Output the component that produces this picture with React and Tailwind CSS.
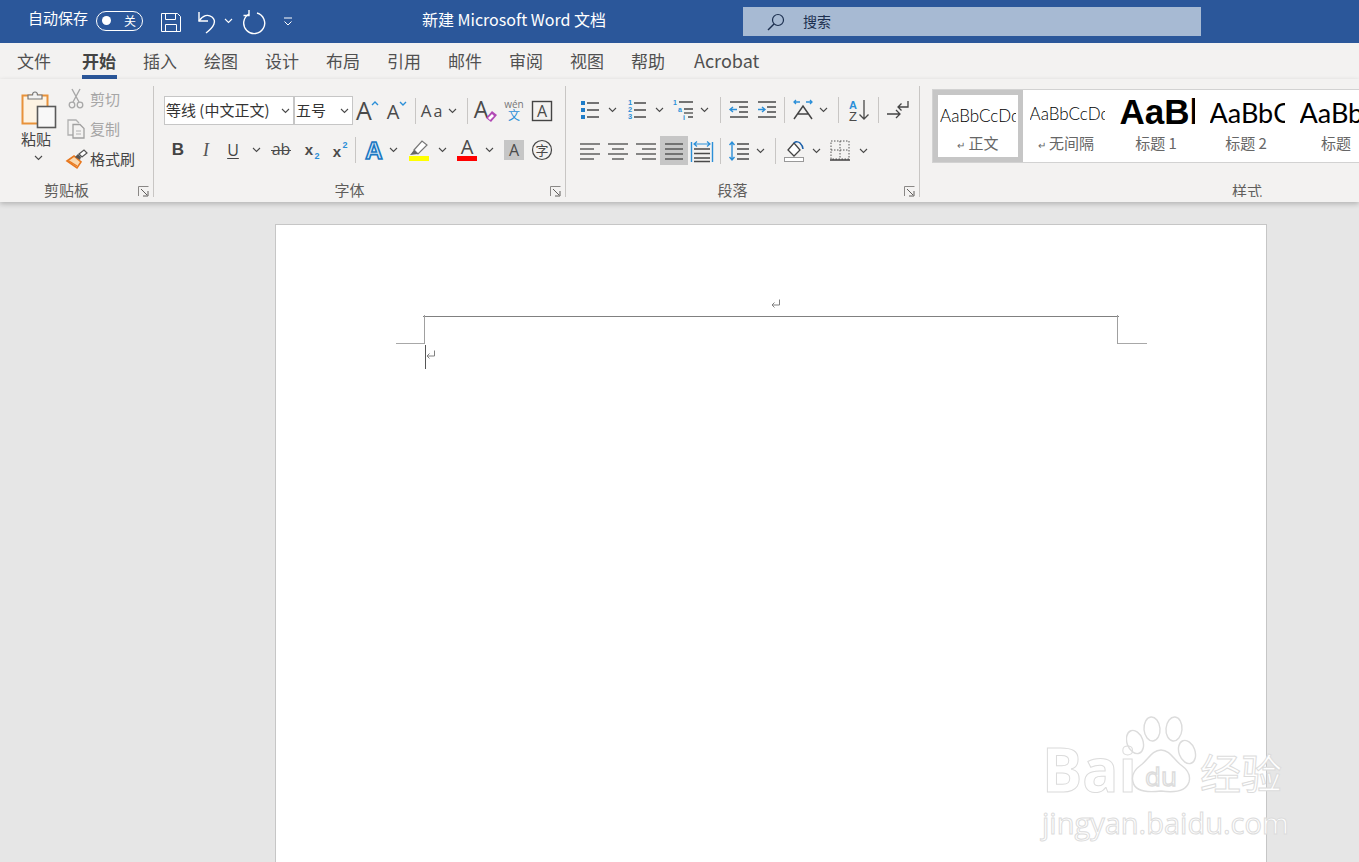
import React from 'react';

const font = 'font-["Noto_Sans_CJK_SC","Liberation_Sans",sans-serif]';
const INK = '#4a4a4a';
const BLUE = '#2b8fd8';

const Slot = ({ className = '', children }) => (
  <div className={`flex items-center justify-center shrink-0 h-[28px] ${className}`}>{children}</div>
);

const Chev = ({ color = INK }) => (
  <svg width="9" height="6" viewBox="0 0 9 6"><path d="M1 1l3.5 3.5L8 1" fill="none" stroke={color} strokeWidth="1.1" /></svg>
);

const Divider = ({ className = '' }) => <div className={`w-px h-[26px] bg-[#c8c6c4] shrink-0 ${className}`} />;

const Ico = ({ children, w = 24, h = 24 }) => (
  <svg width={w} height={h} viewBox={`0 0 ${w} ${h}`} fill="none" className="overflow-visible">{children}</svg>
);

const Glyph = ({ x = 12, y = 19, size = 20, fill = INK, weight = 400, family = 'Open Sans', style = 'normal', children, ...rest }) => (
  <text x={x} y={y} fontSize={size} fill={fill} fontWeight={weight} fontFamily={family} fontStyle={style} textAnchor="middle" {...rest}>{children}</text>
);

const Launcher = () => (
  <svg width="11" height="11" viewBox="0 0 11 11" fill="none" stroke="#605e5c">
    <path d="M.5 10V.5H10.5" stroke="#8a8886" />
    <path d="M3 3l6 6M5 10h5V5" />
  </svg>
);

const ReturnMark = () => (
  <svg width="11" height="11" viewBox="0 0 11 11" fill="none" stroke="#808080">
    <path d="M9.5 1.5v5.5H2" />
    <path d="M4.5 4.5L2 7l2.5 2.5" />
  </svg>
);

const Lines = ({ rows, stroke = INK }) => (
  <Ico>
    {rows.map(([x1, x2, y], i) => <path key={i} d={`M${x1} ${y}H${x2}`} stroke={stroke} strokeWidth="1.3" />)}
  </Ico>
);

const PasteIcon = () => (
  <svg width="36" height="39" viewBox="0 0 36 39" fill="none">
    <rect x="1.5" y="5.5" width="25" height="28" fill="#fdf3e3" stroke="#e8923a" strokeWidth="2" />
    <path d="M7 9V5h4.5c0-4 5-4 5 0H21v4z" fill="#f3f2f1" stroke="#777" strokeWidth="1.2" />
    <rect x="16.5" y="16.5" width="18" height="21" fill="#f8f8f8" stroke="#5a5a5a" strokeWidth="1.6" />
  </svg>
);

const CutIcon = () => (
  <Ico w={20} h={22}>
    <path d="M6 1l7 13M14 1L7 14" stroke="#a8a8a8" strokeWidth="1.4" />
    <circle cx="6" cy="17" r="2.8" stroke="#a8a8a8" strokeWidth="1.3" />
    <circle cx="14" cy="17" r="2.8" stroke="#a8a8a8" strokeWidth="1.3" />
  </Ico>
);

const CopyIcon = () => (
  <Ico w={20} h={22}>
    <path d="M7 17H2V2h8l3 3" stroke="#b0b0b0" strokeWidth="1.3" />
    <path d="M7 6.5h7l4 4V20H7z" fill="#f3f2f1" stroke="#a0a0a0" strokeWidth="1.3" />
    <path d="M10 13h5M10 16h5" stroke="#b0b0b0" />
  </Ico>
);

const BrushIcon = () => (
  <Ico w={22} h={20}>
    <path d="M1 12l7-5 7 6-4 6z" fill="#f9d9b0" stroke="#e8781e" strokeWidth="1.6" />
    <path d="M3 12l8 5" stroke="#e8781e" strokeWidth="1.3" />
    <path d="M9 8l3-3 3 3-1 3z" fill="#555" />
    <path d="M13 5l5-4 3 3-5 4z" fill="#fff" stroke="#555" strokeWidth="1.2" />
  </Ico>
);

const GrowIcon = () => (
  <Ico><Glyph x={9} y={21} size={25}>A</Glyph><path d="M17 6l3-3 3 3" stroke={BLUE} strokeWidth="1.4" /></Ico>
);
const ShrinkIcon = () => (
  <Ico><Glyph x={9} y={20} size={20}>A</Glyph><path d="M16 3l3 3 3-3" stroke={BLUE} strokeWidth="1.4" /></Ico>
);
const AaIcon = () => (
  <Ico w={26}>
    <Glyph x={7} y={18} size={17}>A</Glyph>
    <Glyph x={19} y={18} size={16}>a</Glyph>
  </Ico>
);
const ClearIcon = () => (
  <Ico w={28}>
    <Glyph x={10} y={19} size={23}>A</Glyph>
    <path d="M15 19l6-7 5 4-6 7z" fill="#b24ab5" />
    <path d="M17 19l4-4 2 2-4 4z" fill="#fff" />
  </Ico>
);
const PhoneticIcon = () => (
  <Ico w={24}>
    <Glyph y={9} size={10} fill="#777">wén</Glyph>
    <Glyph y={21} size={12} fill={BLUE} family="Noto Sans CJK SC">文</Glyph>
  </Ico>
);
const BoxAIcon = () => (
  <Ico>
    <rect x="2.5" y="2.5" width="19" height="19" stroke="#444" strokeWidth="1.4" />
    <Glyph y={18} size={16}>A</Glyph>
  </Ico>
);
const Strike = () => (
  <Ico>
    <Glyph y={17} size={16}>ab</Glyph>
    <path d="M2 12.5h20" stroke={INK} strokeWidth="1" />
  </Ico>
);
const Sub = () => (
  <Ico>
    <Glyph x={10} y={17} size={15} weight={700} family="Liberation Sans">x</Glyph>
    <Glyph x={18} y={21} size={9} fill={BLUE} weight={700} family="Liberation Sans">2</Glyph>
  </Ico>
);
const Sup = () => (
  <Ico>
    <Glyph x={10} y={19} size={15} weight={700} family="Liberation Sans">x</Glyph>
    <Glyph x={18} y={10} size={9} fill={BLUE} weight={700} family="Liberation Sans">2</Glyph>
  </Ico>
);
const EffectA = () => (
  <Ico>
    <text x="12" y="21" fontSize="24" fontWeight="700" fontFamily="Liberation Sans" textAnchor="middle" fill="#d6e9f8" stroke="#1a78c2" strokeWidth="1.6">A</text>
  </Ico>
);
const Highlight = () => (
  <Ico w={22}>
    <path d="M6 12l8-9 5 4-9 9z" fill="#fff" stroke="#777" strokeWidth="1.2" />
    <path d="M2 17l4-5 4 4z" fill="#666" />
    <rect x="1" y="18" width="20" height="5" fill="#ffff00" />
  </Ico>
);
const FontColor = () => (
  <Ico w={22}>
    <Glyph x={11} y={16} size={20}>A</Glyph>
    <rect x="1" y="18" width="20" height="5" fill="#ff0000" />
  </Ico>
);
const Shaded = () => (
  <div className="w-[20px] h-[20px] bg-[#c6c6c6] flex items-center justify-center">
    <Ico w={20} h={20}><Glyph x={10} y={16} size={16}>A</Glyph></Ico>
  </div>
);
const Circled = () => (
  <Ico>
    <circle cx="12" cy="12" r="9.5" stroke="#444" strokeWidth="1.2" />
    <Glyph y={17} size={13} family="Noto Sans CJK SC">字</Glyph>
  </Ico>
);

const Bullets = () => (
  <Ico>
    <rect x="3" y="3" width="4" height="4" fill="#1e7cc8" />
    <rect x="3" y="10" width="4" height="4" fill="#1e7cc8" />
    <rect x="3" y="17" width="4" height="4" fill="#1e7cc8" />
    <path d="M9 5h12M9 12h12M9 19h12" stroke={INK} strokeWidth="1.3" />
  </Ico>
);
const Numbers = () => (
  <Ico>
    {['1', '2', '3'].map((n, i) => <Glyph key={n} x={5} y={7 + i * 7} size={7.5} fill={BLUE} weight={700} family="Liberation Sans">{n}</Glyph>)}
    <path d="M9 5h12M9 12h12M9 19h12" stroke={INK} strokeWidth="1.3" />
  </Ico>
);
const Multi = () => (
  <Ico>
    <Glyph x={3} y={7} size={7} fill={BLUE} weight={700} family="Liberation Sans">1</Glyph>
    <Glyph x={8} y={14} size={7} fill={BLUE} weight={700} family="Liberation Sans">a</Glyph>
    <Glyph x={12} y={22} size={7} fill={BLUE} weight={700} family="Liberation Sans">i</Glyph>
    <path d="M7 4h14M12 11h9M16 19h5" stroke={INK} strokeWidth="1.3" />
    <path d="M12 15h9" stroke={INK} strokeWidth="1.3" />
  </Ico>
);
const Outdent = () => (
  <Ico>
    <path d="M3 4h18M12 9h9M12 14h9M3 19h18" stroke={INK} strokeWidth="1.3" />
    <path d="M10 11.5H3M6 9l-3 2.5L6 14" stroke={BLUE} strokeWidth="1.4" />
  </Ico>
);
const Indent = () => (
  <Ico>
    <path d="M3 4h18M12 9h9M12 14h9M3 19h18" stroke={INK} strokeWidth="1.3" />
    <path d="M3 11.5h7M7 9l3 2.5L7 14" stroke={BLUE} strokeWidth="1.4" />
  </Ico>
);
const AsianLayout = () => (
  <Ico w={22}>
    <path d="M2 21L11 8l9 13M5 16h12" stroke="#444" strokeWidth="1.5" />
    <path d="M2 4h6M4 2L2 4l2 2M14 4h6M18 2l2 2-2 2" stroke={BLUE} strokeWidth="1.3" />
  </Ico>
);
const Sort = () => (
  <Ico>
    <Glyph x={6} y={11} size={11} fill={BLUE} weight={700} family="Liberation Sans">A</Glyph>
    <Glyph x={6} y={23} size={13} family="Liberation Sans">Z</Glyph>
    <path d="M17 2v19M12.5 16.5L17 21l4.5-4.5" stroke={INK} strokeWidth="1.3" />
  </Ico>
);
const Rtl = () => (
  <Ico>
    <path d="M1 16h13M10 12l4 4-4 4" stroke="#444" strokeWidth="1.3" />
    <path d="M22 3v6H12M15.5 5.5L12 9l3.5 3.5" stroke="#444" strokeWidth="1.3" />
  </Ico>
);
const Distribute = () => (
  <Ico>
    <path d="M1.5 3v20M22.5 3v20" stroke={BLUE} strokeWidth="1.4" />
    <path d="M4 5h16M7 2.5L4 5l3 2.5M17 2.5L20 5l-3 2.5" stroke={BLUE} strokeWidth="1.2" />
    <path d="M4 10h16M4 14.5h16M4 19h16M4 22.5h16" stroke={INK} strokeWidth="1.3" />
  </Ico>
);
const Spacing = () => (
  <Ico>
    <path d="M9 5h12M9 10h12M9 15h12M9 20h12" stroke={INK} strokeWidth="1.3" />
    <path d="M4 3v18M1.5 6L4 3l2.5 3M1.5 18L4 21l2.5-3" stroke={BLUE} strokeWidth="1.4" />
  </Ico>
);
const Shading = () => (
  <Ico w={22}>
    <path d="M5 11l6-7 6 7-6 6z" fill="#fff" stroke="#444" strokeWidth="1.3" />
    <path d="M11 4c2-2 5-1 6 0 2 2 3 4 3 6" stroke="#1a5fa8" strokeWidth="1.5" />
    <rect x="1.5" y="18.5" width="19" height="4" fill="#fff" stroke="#999" />
  </Ico>
);
const Borders = () => (
  <Ico w={22}>
    <path d="M2 2h18v18H2zM11 2v18M2 11h18" stroke="#555" strokeDasharray="1.5 1.5" />
    <path d="M1 21h20" stroke="#333" strokeWidth="1.4" />
  </Ico>
);

const Combo = ({ className, label }) => (
  <div className={`flex items-center h-[29px] bg-white border border-[#c6c6c6] text-[15px] text-[#333] shrink-0 ${className}`}>
    <span className="flex-1 pl-px whitespace-nowrap overflow-hidden">{label}</span>
    <span className="pr-[3px] flex"><Chev /></span>
  </div>
);

const Group = ({ className, label, children }) => (
  <div className={`h-[111px] flex flex-col shrink-0 border-r border-[#c8c6c4] ${className}`}>
    <div className="h-[95px]">{children}</div>
    <div className="h-[16px] flex items-center">
      <span className="flex-1 pr-[5px] pt-px text-center text-[15px] leading-[18px] text-[#605e5c] whitespace-nowrap">{label}</span>
      <span className="w-[15px] flex mt-[4px]"><Launcher /></span>
    </div>
  </div>
);

const TABS = ['插入', '绘图', '设计', '布局', '引用', '邮件', '审阅', '视图', '帮助'];

const STYLES = [
  { text: 'AaBbCcDd', label: '无间隔', mark: true, cls: 'text-[17px] pt-[3px] text-black font-light font-["Lato"]' },
  { text: 'AaBbCc', label: '标题 1', cls: 'text-[35px] leading-[38px] font-bold text-black font-["Liberation_Sans"]' },
  { text: 'AaBbCc', label: '标题 2', cls: 'text-[27px] leading-[30px] pt-[2px] text-black font-["Lato"]' },
  { text: 'AaBbCc', label: '标题', cls: 'text-[27px] leading-[30px] pt-[2px] text-black font-["Lato"]' },
];

const StyleCard = ({ text, label, mark, cls }) => (
  <div className="w-[90px] shrink-0 flex flex-col items-center pt-[3px] pl-[6px] pr-[8px]">
    <div className={`w-[75px] h-[38px] flex items-center overflow-hidden whitespace-nowrap ${cls}`}>{text}</div>
    <div className="mt-[2px] ml-[-2px] text-[15px] leading-[20px] text-[#666] whitespace-nowrap">
      {mark && <span className="text-[10px] mr-[3px]">↵</span>}{label}
    </div>
  </div>
);

const Paw = () => (
  <svg width="80" height="84" viewBox="0 0 80 84" fill="none" stroke="#dcdcdc" strokeWidth="1.4">
    <ellipse cx="9" cy="27" rx="8" ry="12" transform="rotate(-20 9 27)" />
    <ellipse cx="26" cy="14" rx="8" ry="12" transform="rotate(-5 26 14)" />
    <ellipse cx="48" cy="14" rx="8" ry="12" transform="rotate(5 48 14)" />
    <ellipse cx="61" cy="37" rx="8" ry="12" transform="rotate(-20 61 37)" />
    <path d="M35 35c-9 0-13 10-20 15c-7 5-10 10-8 17c2 9 12 11 28 9c14 2 25 0 28-9c2-7-1-12-8-17c-7-5-11-15-20-15z" />
    <text x="35" y="71" fontSize="26" fontFamily="Open Sans" fill="#fff" textAnchor="middle">du</text>
  </svg>
);

export default function App() {
  return (
    <div className={`relative w-[1359px] h-[862px] overflow-hidden bg-[#e6e6e6] ${font}`}>
      {/* title bar */}
      <div className="h-[43px] bg-[#2b579a] flex items-center text-white">
        <span className="ml-[28px] mb-[6px] text-[15px] w-[60px] whitespace-nowrap">自动保存</span>
        <div className="ml-[8px] mb-[2px] w-[47px] h-[20px] rounded-full border border-white flex items-center justify-between px-[5px]">
          <span className="w-[9px] h-[9px] rounded-full bg-white" />
          <span className="text-[12px] leading-none mr-[1px]">关</span>
        </div>
        <div className="ml-[18px] flex">
          <Ico w={20} h={22}>
            <path d="M.5 2.5h16l3 3v15H.5zM4.5 2.5v6h10v-6M4.5 20.5v-7h11v7" stroke="#fff" />
          </Ico>
        </div>
        <div className="ml-[16px] flex">
          <Ico w={20} h={24}>
            <path d="M2 2v9h9" stroke="#fff" strokeWidth="1.4" />
            <path d="M2 11c4-6 9-7 13-4 5 4 2 10-6 16" stroke="#fff" strokeWidth="1.4" />
          </Ico>
        </div>
        <span className="ml-[7px] mb-[2px] flex"><Chev color="#fff" /></span>
        <div className="ml-[10px] flex">
          <Ico w={22} h={24}>
            <path d="M14 3A10.5 10.5 0 1 1 6 4" stroke="#fff" strokeWidth="1.4" />
            <path d="M6 0v5.5H.5" stroke="#fff" strokeWidth="1.4" />
          </Ico>
        </div>
        <div className="ml-[18px] flex">
          <Ico w={10} h={10}><path d="M1 1h8M1.5 4.5L5 8l3.5-3.5" stroke="#fff" /></Ico>
        </div>
        <span className="ml-[128px] mb-[6px] w-[186px] text-[16px] text-center whitespace-nowrap">新建 Microsoft Word 文档</span>
        <div className="ml-[136px] w-[458px] h-[29px] bg-[#a7bad3] flex items-center text-[#1c2f4f] text-[14px]">
          <span className="ml-[23px] flex">
            <Ico w={20} h={20}>
              <circle cx="12" cy="8" r="5.5" stroke="#1c2f4f" strokeWidth="1.2" />
              <path d="M8 12l-6 6" stroke="#1c2f4f" strokeWidth="1.4" />
            </Ico>
          </span>
          <span className="ml-[17px]">搜索</span>
        </div>
      </div>

      {/* tabs */}
      <div className="h-[36px] bg-[#f3f2f1] flex items-start pl-[17px] pt-[6px] gap-[27px] text-[17px] leading-[24px] text-[#505050]">
        <span className="mr-[4px]">文件</span>
        <span className="relative font-bold text-[#444]">
          开始
          <span className="absolute left-0 -right-px top-[26px] h-[4px] bg-[#2b579a]" />
        </span>
        {TABS.map((t) => <span key={t} className="whitespace-nowrap">{t}</span>)}
        <span className="ml-[2px] mt-[-1px] text-[18px] whitespace-nowrap">Acrobat</span>
      </div>

      {/* ribbon */}
      <div className="relative z-10 h-[123px] bg-[#f3f2f1] pt-[7px] flex shadow-[0_2px_5px_rgba(0,0,0,0.22)]">
        <Group className="w-[154px]" label="剪贴板">
          <div className="flex">
            <div className="ml-[21px] mt-[4px] w-[36px] flex flex-col items-center">
              <PasteIcon />
              <span className="text-[15px] leading-[20px] text-[#444] mr-[6px] whitespace-nowrap">粘贴</span>
              <span className="mt-[6px] mr-[2px] flex"><Chev /></span>
            </div>
            <div className="ml-[9px] mt-[-2px] flex flex-col text-[15px]">
              <div className="h-[30px] flex items-center text-[#a6a6a6]"><span className="w-[24px] flex"><CutIcon /></span>剪切</div>
              <div className="h-[30px] flex items-center text-[#a6a6a6]"><span className="w-[24px] flex"><CopyIcon /></span>复制</div>
              <div className="h-[30px] flex items-center text-[#444] whitespace-nowrap"><span className="w-[24px] flex"><BrushIcon /></span>格式刷</div>
            </div>
          </div>
        </Group>

        <Group className="w-[412px]" label="字体">
          <div className="pt-[10px] pl-[10px] flex items-center">
            <Combo className="w-[130px]" label="等线 (中文正文)" />
            <Combo className="w-[59px]" label="五号" />
            <Slot className="w-[28px]"><GrowIcon /></Slot>
            <Slot className="w-[28px] ml-[1px]"><ShrinkIcon /></Slot>
            <Divider className="ml-[5px]" />
            <Slot className="w-[26px] ml-[3px]"><AaIcon /></Slot>
            <Slot className="w-[14px]"><Chev /></Slot>
            <Divider className="ml-[8px]" />
            <Slot className="w-[28px] ml-[3px]"><ClearIcon /></Slot>
            <Slot className="w-[28px] ml-[1px]"><PhoneticIcon /></Slot>
            <Slot className="w-[28px]"><BoxAIcon /></Slot>
          </div>
          <div className="mt-[11px] pl-[10px] flex items-center">
            <Slot className="w-[28px] text-[17px] font-bold text-[#444] font-['Liberation_Sans']">B</Slot>
            <Slot className="w-[28px] text-[18px] italic text-[#555] font-['Liberation_Serif']">I</Slot>
            <Slot className="w-[26px] text-[16px] underline underline-offset-2 text-[#444] font-['Open_Sans']">U</Slot>
            <Slot className="w-[20px]"><Chev /></Slot>
            <Slot className="w-[28px] ml-[1px]"><Strike /></Slot>
            <Slot className="w-[28px] ml-[2px]"><Sub /></Slot>
            <Slot className="w-[28px]"><Sup /></Slot>
            <Divider className="ml-[2px]" />
            <Slot className="w-[28px] ml-[4px]"><EffectA /></Slot>
            <Slot className="w-[10px]"><Chev /></Slot>
            <Slot className="w-[28px] ml-[7px]"><Highlight /></Slot>
            <Slot className="w-[18px]"><Chev /></Slot>
            <Slot className="w-[28px] ml-[2px]"><FontColor /></Slot>
            <Slot className="w-[16px]"><Chev /></Slot>
            <Slot className="w-[28px] ml-[3px]"><Shaded /></Slot>
            <Slot className="w-[28px]"><Circled /></Slot>
          </div>
        </Group>

        <Group className="w-[354px]" label="段落">
          <div className="pt-[10px] pl-[10px] flex items-center">
            <Slot className="w-[28px]"><Bullets /></Slot>
            <Slot className="w-[16px]"><Chev /></Slot>
            <Slot className="w-[28px] ml-[3px]"><Numbers /></Slot>
            <Slot className="w-[16px]"><Chev /></Slot>
            <Slot className="w-[28px] ml-[3px]"><Multi /></Slot>
            <Slot className="w-[12px]"><Chev /></Slot>
            <Divider className="ml-[10px]" />
            <Slot className="w-[28px] ml-[4px]"><Outdent /></Slot>
            <Slot className="w-[28px]"><Indent /></Slot>
            <Divider className="ml-[3px]" />
            <Slot className="w-[28px] ml-[4px]"><AsianLayout /></Slot>
            <Slot className="w-[12px]"><Chev /></Slot>
            <Divider className="ml-[9px]" />
            <Slot className="w-[28px] ml-[6px]"><Sort /></Slot>
            <Divider className="ml-[5px]" />
            <Slot className="w-[28px] ml-[5px]"><Rtl /></Slot>
          </div>
          <div className="mt-[12px] pl-[10px] flex items-center">
            <Slot className="w-[28px] h-[29px]"><Lines rows={[[2, 22, 5], [2, 16, 10], [2, 22, 15], [2, 16, 20]]} /></Slot>
            <Slot className="w-[28px] h-[29px]"><Lines rows={[[2, 22, 5], [6, 18, 10], [2, 22, 15], [6, 18, 20]]} /></Slot>
            <Slot className="w-[28px] h-[29px]"><Lines rows={[[2, 22, 5], [8, 22, 10], [2, 22, 15], [8, 22, 20]]} /></Slot>
            <Slot className="w-[28px] h-[29px] bg-[#c6c6c6]"><Lines rows={[[3, 21, 5], [3, 21, 10], [3, 21, 15], [3, 21, 20]]} stroke="#444" /></Slot>
            <Slot className="w-[28px]"><Distribute /></Slot>
            <Divider className="ml-[4px]" />
            <Slot className="w-[28px] ml-[5px]"><Spacing /></Slot>
            <Slot className="w-[12px]"><Chev /></Slot>
            <Divider className="ml-[9px]" />
            <Slot className="w-[28px] ml-[4px]"><Shading /></Slot>
            <Slot className="w-[16px]"><Chev /></Slot>
            <Slot className="w-[28px] ml-[2px]"><Borders /></Slot>
            <Slot className="w-[19px]"><Chev /></Slot>
          </div>
        </Group>

        <div className="flex-1 min-w-0 h-[111px] flex flex-col overflow-hidden">
          <div className="h-[95px] pt-[3px] pl-[12px]">
            <div className="w-[480px] h-[74px] bg-white border-y border-l border-[#d2d2d2] flex">
              <div className="w-[90px] h-[72px] shrink-0 border-[5px] border-[#c6c6c6] flex flex-col items-center">
                <div className="w-[76px] h-[38px] pt-[3px] flex items-center overflow-hidden whitespace-nowrap text-[17px] font-light text-black font-['Lato']">AaBbCcDd</div>
                <div className="text-[15px] leading-[20px] text-[#666] whitespace-nowrap">
                  <span className="text-[10px] mr-[3px]">↵</span>正文
                </div>
              </div>
              {STYLES.map((s) => <StyleCard key={s.label} {...s} />)}
            </div>
          </div>
          <div className="h-[16px] pl-[312px] pt-px text-[15px] leading-[18px] text-[#605e5c]">样式</div>
        </div>
      </div>

      {/* document canvas */}
      <div className="pt-[22px] pl-[275px]">
        <div className="relative w-[992px] h-[700px] bg-white border border-[#c6c6c6]">
          <span className="absolute left-[147px] top-[91px] h-px w-[696px] bg-[#808080]" />
          <span className="absolute left-[148px] top-[90px] w-px h-[29px] bg-[#a0a0a0]" />
          <span className="absolute left-[120px] top-[118px] w-[28px] h-px bg-[#a8a8a8]" />
          <span className="absolute left-[841px] top-[90px] w-px h-[29px] bg-[#a0a0a0]" />
          <span className="absolute left-[842px] top-[118px] w-[29px] h-px bg-[#a8a8a8]" />
          <span className="absolute left-[494px] top-[73px] flex"><ReturnMark /></span>
          <span className="absolute left-[149px] top-[120px] w-px h-[24px] bg-[#555]" />
          <span className="absolute left-[149px] top-[124px] flex"><ReturnMark /></span>
        </div>
      </div>

      {/* watermark */}
      <div className="absolute left-[1040px] top-[715px] w-[260px] h-[125px]">
        <div className="absolute left-[2px] top-[19px] text-[60px] leading-[70px] font-bold text-white [-webkit-text-stroke:1px_#dcdcdc] font-['Open_Sans'] whitespace-nowrap">Bai</div>
        <div className="absolute left-[86px] top-0"><Paw /></div>
        <div className="absolute left-[160px] top-[30px] text-[41px] leading-[52px] text-white [-webkit-text-stroke:1px_#dcdcdc] whitespace-nowrap">经验</div>
        <div className="absolute left-[2px] top-[88px] text-[29px] leading-[40px] text-white [-webkit-text-stroke:1px_#dcdcdc] font-['Open_Sans'] whitespace-nowrap">jingyan.baidu.com</div>
      </div>
    </div>
  );
}
